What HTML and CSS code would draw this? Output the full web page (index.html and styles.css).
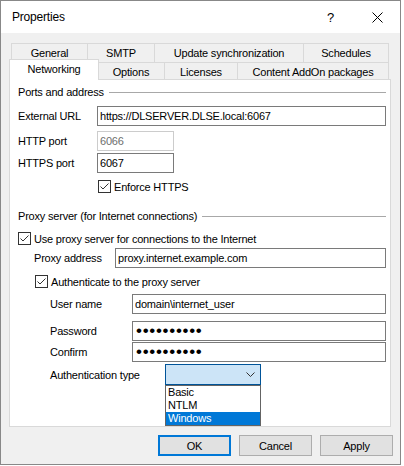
FILE: index.html
```html
<!DOCTYPE html>
<html lang="en">

<head>
    <meta charset="UTF-8">
    <meta name="viewport" content="width=device-width, initial-scale=1.0">
    <title>Properties</title>
    <link rel="stylesheet" href="styles.css">
</head>

<body>
    <div class="window">
        <div class="titlebar">
            <span class="title">Properties</span>
            <span class="help">?</span>
            <svg class="close" width="11" height="11" viewBox="0 0 11 11">
                <path d="M0.5 0.5 L10.5 10.5 M10.5 0.5 L0.5 10.5" stroke="#000" stroke-width="1" />
            </svg>
        </div>
        <div class="content">
            <div class="tabs">
                <div class="tab-row top">
                    <div class="tab tab-general">General</div>
                    <div class="tab tab-smtp">SMTP</div>
                    <div class="tab tab-update">Update synchronization</div>
                    <div class="tab tab-schedules">Schedules</div>
                </div>
                <div class="tab-row bottom">
                    <div class="tab tab-networking active">Networking</div>
                    <div class="tab tab-options">Options</div>
                    <div class="tab tab-licenses">Licenses</div>
                    <div class="tab tab-addons">Content AddOn packages</div>
                </div>
            </div>

            <div class="panel">
                <div class="group-title first">Ports and address</div>
                <div class="field gap-url">
                    <label>External URL</label>
                    <input class="wide" type="text" value="https://DLSERVER.DLSE.local:6067" />
                </div>
                <div class="field gap-http">
                    <label>HTTP port</label>
                    <input class="port" type="text" value="6066" disabled />
                </div>
                <div class="field gap-https">
                    <label>HTTPS port</label>
                    <input class="port" type="text" value="6067" />
                </div>
                <div class="check gap-enforce indent-port">
                    <svg class="box" width="13" height="13" viewBox="0 0 13 13">
                        <rect x="0.5" y="0.5" width="12" height="12" fill="#fff" stroke="#333" />
                        <path d="M2.5 6.5 L5 9 L10.5 3.5" fill="none" stroke="#333" />
                    </svg>
                    <span>Enforce HTTPS</span>
                </div>

                <div class="group-title second">Proxy server (for Internet connections)</div>
                <div class="check gap-useproxy">
                    <svg class="box" width="13" height="13" viewBox="0 0 13 13">
                        <rect x="0.5" y="0.5" width="12" height="12" fill="#fff" stroke="#333" />
                        <path d="M2.5 6.5 L5 9 L10.5 3.5" fill="none" stroke="#333" />
                    </svg>
                    <span>Use proxy server for connections to the Internet</span>
                </div>
                <div class="field gap-proxyaddr indent-1">
                    <label class="lbl-proxy">Proxy address</label>
                    <input class="wide" type="text" value="proxy.internet.example.com" />
                </div>
                <div class="check gap-auth indent-1b">
                    <svg class="box" width="13" height="13" viewBox="0 0 13 13">
                        <rect x="0.5" y="0.5" width="12" height="12" fill="#fff" stroke="#333" />
                        <path d="M2.5 6.5 L5 9 L10.5 3.5" fill="none" stroke="#333" />
                    </svg>
                    <span>Authenticate to the proxy server</span>
                </div>
                <div class="field gap-user indent-2">
                    <label class="lbl-auth">User name</label>
                    <input class="wide" type="text" value="domain\internet_user" />
                </div>
                <div class="field gap-pass indent-2">
                    <label class="lbl-auth">Password</label>
                    <input class="wide secret" type="password" value="0123456789" />
                </div>
                <div class="field gap-confirm indent-2">
                    <label class="lbl-auth">Confirm</label>
                    <input class="wide secret" type="password" value="0123456789" />
                </div>
                <div class="field gap-type indent-2">
                    <label class="lbl-type">Authentication type</label>
                    <div class="combo">
                        <div class="combo-box">
                            <svg class="chevron" width="9" height="5" viewBox="0 0 9 5">
                                <path d="M0.5 0.5 L4.5 4.5 L8.5 0.5" fill="none" stroke="#333" />
                            </svg>
                        </div>
                        <ul class="combo-list">
                            <li>Basic</li>
                            <li>NTLM</li>
                            <li class="selected">Windows</li>
                        </ul>
                    </div>
                </div>
            </div>

            <div class="buttons">
                <button class="btn default">OK</button>
                <button class="btn">Cancel</button>
                <button class="btn">Apply</button>
            </div>
        </div>
    </div>
</body>

</html>
```

FILE: styles.css
```css
body {
    margin: 0;
    font-family: "Liberation Sans", Arial, sans-serif;
    font-size: 11px;
    letter-spacing: -0.2px;
    color: #000;
    background: #fff;
}

.window {
    width: 399px;
    height: 463px;
    border: 1px solid #888;
    background: #f0f0f0;
}

/* title bar */
.titlebar {
    height: 32px;
    background: #fff;
    display: flex;
    align-items: center;
    padding: 0 17px 0 11px;
}

.title {
    flex: 1;
    font-size: 12px;
}

.help {
    font-size: 13px;
    margin-right: 38px;
}

.content {
    padding: 10px 9px 0 8px;
}

/* tabs */
.tabs {
    padding: 0 2px;
}

.tab-row {
    display: flex;
    align-items: flex-start;
}

.tab {
    box-sizing: border-box;
    border: 1px solid #d9d9d9;
    border-right: none;
    border-bottom: none;
    text-align: center;
    white-space: nowrap;
}

.tab:last-child {
    border-right: 1px solid #d9d9d9;
}

.tab-row.top .tab {
    height: 19px;
    line-height: 18px;
}

.tab-row.bottom {
    height: 17px;
}

.tab-row.bottom .tab {
    height: 17px;
    line-height: 16px;
    padding-top: 1px;
}

.tab-general { width: 76px; }
.tab-smtp { width: 67px; }
.tab-update { width: 149px; }
.tab-schedules { width: 86px; }
.tab-networking { width: 86px; }
.tab-options { width: 67px; }
.tab-licenses { width: 73px; }
.tab-addons { width: 152px; }

.tab-row.bottom .tab.active {
    position: relative;
    z-index: 1;
    width: 90px;
    height: 21px;
    line-height: 18px;
    padding-top: 0;
    margin: -3px -2px -1px;
    background: #fff;
    border-right: 1px solid #d9d9d9;
}

/* page */
.panel {
    box-sizing: border-box;
    height: 348px;
    border: 1px solid #d9d9d9;
    background: #fff;
    padding: 0 4px 0 8px;
}

.group-title {
    display: flex;
    align-items: center;
    height: 14px;
    white-space: nowrap;
}

.group-title::after {
    content: "";
    flex: 1;
    height: 1px;
    margin-left: 5px;
    background: #a8a8a8;
}

.group-title.first { margin-top: 5px; }
.group-title.second { margin-top: 16px; }

.field {
    display: flex;
    align-items: center;
    height: 20px;
}

.field label {
    width: 79px;
    flex-shrink: 0;
}

.field input {
    box-sizing: border-box;
    height: 20px;
    margin: 0;
    border: 1px solid #7a7a7a;
    padding: 0 2px;
    font: inherit;
    letter-spacing: inherit;
    color: #000;
    background: #fff;
    outline: none;
}

.field input.wide {
    flex: 1;
    min-width: 0;
}

.field input.port {
    width: 77px;
}

.field input:disabled {
    border-color: #cccccc;
    color: #6d6d6d;
}

.field input.secret {
    font-size: 17px;
    letter-spacing: 0.7px;
    padding-left: 3px;
}

.check {
    display: flex;
    align-items: center;
    height: 13px;
}

.check .box {
    margin-right: 3px;
    flex-shrink: 0;
}

.gap-url { margin-top: 7px; }
.gap-http { margin-top: 5px; }
.gap-https { margin-top: 2px; }
.gap-enforce { margin-top: 7px; }
.gap-useproxy { margin-top: 9px; }
.gap-proxyaddr { margin-top: 3px; }
.gap-auth { margin-top: 7px; }
.gap-user { margin-top: 6px; }
.gap-pass { margin-top: 7px; }
.gap-confirm { margin-top: 1px; }
.gap-type { margin-top: 2px; height: 21px; }

.indent-port { padding-left: 80px; }
.indent-1 { padding-left: 16px; }
.indent-1b { padding-left: 17px; }
.indent-2 { padding-left: 32px; }

.field .lbl-proxy { width: 81px; }
.field .lbl-auth { width: 82px; }
.field .lbl-type { width: 115px; }

/* combo box, dropped down */
.combo {
    position: relative;
    width: 96px;
}

.combo-box {
    box-sizing: border-box;
    height: 21px;
    border: 1px solid #005499;
    background: #cce4f7;
    display: flex;
    align-items: center;
    justify-content: flex-end;
    padding-right: 5px;
}

.combo-list {
    position: absolute;
    top: 21px;
    left: 0;
    right: 0;
    margin: 0;
    padding: 0;
    list-style: none;
    border: 1px solid #646464;
    background: #fff;
    z-index: 2;
}

.combo-list li {
    height: 13px;
    line-height: 13px;
    padding-left: 2px;
}

.combo-list li.selected {
    background: #0078d7;
    color: #fff;
}

/* dialog buttons */
.buttons {
    display: flex;
    justify-content: flex-end;
    gap: 8px;
    margin-top: 8px;
    margin-right: -2px;
}

.btn {
    box-sizing: border-box;
    width: 73px;
    height: 21px;
    border: 1px solid #adadad;
    background: #e1e1e1;
    font: inherit;
    letter-spacing: inherit;
    color: #000;
    padding: 0;
}

.btn.default {
    border: 2px solid #0078d7;
}
```
